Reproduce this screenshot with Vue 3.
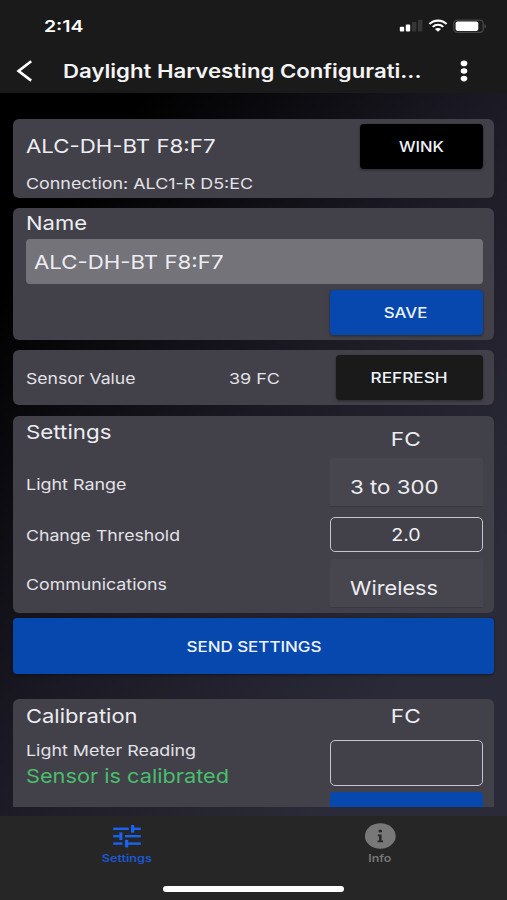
<script setup>
// Sets the width of a label's text box by stretching its glyphs horizontally.
const vFit = {
  mounted(el, { value }) {
    const natural = el.getBoundingClientRect().width
    el.style.transform = `scaleX(${value / natural})`
  },
}
</script>

<template>
  <div class="screen">
    <header class="top">
      <div class="status">
        <span v-fit="39.5" class="t time">2:14</span>
        <div class="status-icons">
          <svg class="signal" width="24" height="14" viewBox="0 0 24 14">
            <rect x="0.8" y="7.7" width="4.4" height="4.8" rx="1" fill="#fff" />
            <rect x="6.8" y="5.5" width="4.4" height="7" rx="1" fill="#fff" />
            <rect x="12.9" y="3" width="4.4" height="9.5" rx="1" fill="#363636" />
            <rect x="18.9" y="0.8" width="4.4" height="11.7" rx="1" fill="#363636" />
          </svg>
          <svg class="wifi" width="20" height="14" viewBox="0 0 20 14">
            <path d="M1.4 5.1C6 .4 14 .4 18.6 5.1" fill="none" stroke="#fff" stroke-width="2.1" />
            <path d="M4.7 7.9C7.6 5 12.4 5 15.3 7.9" fill="none" stroke="#fff" stroke-width="2" />
            <path d="M10 12.7L6.9 10.1C8.5 8.6 11.5 8.6 13.1 10.1Z" fill="#fff" />
          </svg>
          <svg class="battery" width="34" height="15" viewBox="0 0 34 15">
            <rect x="0.8" y="1.1" width="29.4" height="12.3" rx="3.4" fill="#1c1c1c" stroke="#474747" stroke-width="1.3" />
            <rect x="2.6" y="2.6" width="22.7" height="9.3" rx="1.8" fill="#fff" />
            <path d="M31.5 5C33.6 5.8 33.6 8.8 31.5 9.6Z" fill="#474747" />
          </svg>
        </div>
      </div>
      <div class="title-bar">
        <svg class="back" width="18" height="24" viewBox="0 0 18 24">
          <path d="M15.2 2.2L2.6 12L15.2 21.6" fill="none" stroke="#fff" stroke-width="2.7" />
        </svg>
        <h1><span v-fit="358.5" class="t title">Daylight Harvesting Configurati...</span></h1>
        <svg class="more" width="8" height="22" viewBox="0 0 8 22">
          <ellipse cx="4" cy="3.4" rx="3.3" ry="2.8" fill="#fff" />
          <ellipse cx="4" cy="11" rx="3.3" ry="2.8" fill="#fff" />
          <ellipse cx="4" cy="18.6" rx="3.3" ry="2.8" fill="#fff" />
        </svg>
      </div>
    </header>

    <main class="content">
      <section class="card device">
        <div class="device-info">
          <span v-fit="189.5" class="t lg">ALC-DH-BT F8:F7</span>
          <span v-fit="227" class="t md">Connection: ALC1-R D5:EC</span>
        </div>
        <button class="btn wink"><span v-fit="45" class="t caps">WINK</span></button>
      </section>

      <section class="card name">
        <h2><span v-fit="61" class="t lg">Name</span></h2>
        <div class="name-field"><span v-fit="189.5" class="t lg">ALC-DH-BT F8:F7</span></div>
        <button class="btn save"><span v-fit="43.5" class="t caps">SAVE</span></button>
      </section>

      <section class="card sensor">
        <div class="sensor-label"><span v-fit="109.5" class="t md">Sensor Value</span></div>
        <div class="sensor-value"><span v-fit="51" class="t md">39 FC</span></div>
        <button class="btn refresh"><span v-fit="77" class="t caps">REFRESH</span></button>
      </section>

      <section class="card settings">
        <div class="labels">
          <h2><span v-fit="85.5" class="t lg">Settings</span></h2>
          <label class="range-label"><span v-fit="100.5" class="t md">Light Range</span></label>
          <label class="threshold-label"><span v-fit="154" class="t md">Change Threshold</span></label>
          <label class="comm-label"><span v-fit="141" class="t md">Communications</span></label>
        </div>
        <div class="fields">
          <div class="unit"><span v-fit="30" class="t lg">FC</span></div>
          <div class="select range"><span v-fit="88.5" class="t lg">3 to 300</span></div>
          <div class="outlined threshold"><span v-fit="29.5" class="t mid">2.0</span></div>
          <div class="select comm"><span v-fit="88" class="t lg">Wireless</span></div>
        </div>
      </section>

      <button class="btn send"><span v-fit="135" class="t caps">SEND SETTINGS</span></button>

      <section class="card calibration">
        <div class="labels">
          <h2><span v-fit="111.5" class="t lg">Calibration</span></h2>
          <label class="meter-label"><span v-fit="170" class="t md">Light Meter Reading</span></label>
          <p class="state"><span v-fit="203" class="t lg">Sensor is calibrated</span></p>
        </div>
        <div class="fields">
          <div class="unit"><span v-fit="30" class="t lg">FC</span></div>
          <div class="outlined meter"></div>
          <div class="calibrate"></div>
        </div>
      </section>
    </main>

    <footer class="bottom">
      <nav>
        <a class="tab active">
          <svg width="30" height="24" viewBox="0 0 30 24">
            <g fill="#1a62f2">
              <rect x="1.2" y="3.6" width="15.6" height="2.4" />
              <rect x="19" y="1" width="3.2" height="7.6" />
              <rect x="22" y="3.6" width="6.8" height="2.4" />
              <rect x="1.2" y="11" width="6.3" height="2.4" />
              <rect x="7.3" y="8.4" width="3.1" height="7.6" />
              <rect x="13" y="11" width="15.8" height="2.4" />
              <rect x="1.2" y="18.4" width="9.2" height="2.4" />
              <rect x="13" y="15.8" width="3.2" height="7.6" />
              <rect x="16" y="18.4" width="12.8" height="2.4" />
            </g>
          </svg>
          <span v-fit="50" class="t tab-text">Settings</span>
        </a>
        <a class="tab">
          <svg width="32" height="26" viewBox="0 0 32 26">
            <ellipse cx="16.3" cy="13" rx="15.4" ry="12.7" fill="#787878" />
            <ellipse cx="16.3" cy="8.1" rx="1.8" ry="1.5" fill="#262626" />
            <path d="M13.8 11.4H17.6V17.4H19.1V19.3H13.6V17.4H15.1V13.2H13.8Z" fill="#262626" />
          </svg>
          <span v-fit="23" class="t tab-text">Info</span>
        </a>
      </nav>
      <div class="home-indicator"></div>
    </footer>
  </div>
</template>

<style>
body {
  margin: 0;
  background: #000;
}
</style>

<style scoped>
* {
  box-sizing: border-box;
}

.screen {
  display: flex;
  flex-direction: column;
  width: 507px;
  height: 900px;
  overflow: hidden;
  color: #ededf1;
  font-family: Inter, "Liberation Sans", sans-serif;
  background: linear-gradient(126deg, #000 18%, #1a1923 47%, #2b2a38 78%);
}

h1,
h2,
p {
  margin: 0;
  font-size: inherit;
  font-weight: 400;
}

.t {
  display: inline-block;
  flex: none;
  white-space: nowrap;
  transform-origin: left center;
}

.lg { font-size: 19.3px; }
.mid { font-size: 17.3px; }

.md {
  color: #e2e2e7;
  font-size: 15px;
}

.caps {
  font-size: 14.3px;
  font-weight: 500;
}

.btn .t,
.unit .t,
.outlined .t,
.tab .t {
  transform-origin: center;
}

.top {
  flex: none;
  height: 93px;
  padding-top: 14px;
  background: #1a1a1a;
  color: #fff;
}

.status {
  display: flex;
  align-items: center;
  justify-content: space-between;
  height: 24px;
  padding: 0 20px 0 44px;
}

.time {
  font-size: 15.6px;
  font-weight: 600;
}

.status-icons {
  display: flex;
  align-items: center;
}

.wifi,
.battery {
  margin-left: 5px;
}

.title-bar {
  display: flex;
  align-items: center;
  height: 34px;
  margin-top: 16px;
  padding: 0 39px 0 16px;
}

h1 {
  display: flex;
  flex: 1;
  margin-left: 28.5px;
}

.title {
  color: #f4f4f4;
  font-size: 18.6px;
  font-weight: 600;
}

.content {
  flex: none;
  height: 713.5px;
  padding: 25.5px 13px 0;
  overflow: hidden;
}

.card {
  display: flex;
  border-radius: 6px;
  background: #42414a;
}

.btn {
  display: flex;
  align-items: center;
  justify-content: center;
  padding: 0;
  border: 0;
  border-radius: 4px;
  color: #eef2fb;
  font-family: inherit;
  background: #0648ad;
  box-shadow: 0 1px 3px rgba(0, 0, 0, 0.4);
}

.device,
.name,
.sensor,
.settings,
.calibration {
  padding: 0 11.5px 0 12.5px;
}

.device {
  justify-content: space-between;
  height: 79px;
  padding-top: 5px;
}

.device-info {
  display: flex;
  flex-direction: column;
  align-items: flex-start;
}

.device-info .lg { line-height: 44px; }
.device-info .md { line-height: 32.5px; }

.wink {
  width: 122.5px;
  height: 45px;
  background: #000;
}

.name {
  flex-direction: column;
  height: 132.5px;
  margin-top: 10px;
}

.name h2 {
  height: 31.5px;
  line-height: 31px;
}

.name-field {
  display: flex;
  align-items: center;
  height: 45px;
  padding-left: 8.5px;
  border-radius: 4px;
  background: #737379;
}

.save {
  align-self: flex-end;
  width: 153px;
  height: 45px;
  margin-top: 6px;
}

.sensor {
  align-items: center;
  height: 55px;
  margin-top: 10px;
}

.sensor-label { width: 203.5px; }
.sensor-value { flex: 1; }

.refresh {
  width: 147px;
  height: 45px;
  background: #1a1a1a;
}

.settings {
  justify-content: space-between;
  height: 197.5px;
  margin-top: 10.5px;
}

.labels,
.fields {
  display: flex;
  flex-direction: column;
}

.fields { width: 153px; }

.labels h2 { line-height: 33px; }
.range-label { margin-top: 14px; line-height: 40px; }
.threshold-label { margin-top: 10px; line-height: 40px; }
.comm-label { margin-top: 8px; line-height: 40px; }

.unit {
  display: flex;
  align-items: center;
  justify-content: center;
}

.settings .unit {
  height: 30px;
  margin-top: 8px;
}

.select {
  display: flex;
  align-items: center;
  height: 49px;
  padding: 10px 0 0 20px;
  border-bottom: 1px solid #3a3941;
  border-radius: 3px 3px 0 0;
  background: #47464e;
}

.range { margin-top: 4px; }

.outlined {
  display: flex;
  align-items: center;
  justify-content: center;
  border: 1.5px solid #c6c5ce;
  border-radius: 5px;
}

.threshold {
  height: 35px;
  margin: 10.5px 0 6.5px;
}

.send {
  width: 100%;
  height: 56px;
  margin-top: 5px;
}

.calibration {
  justify-content: space-between;
  height: 180px;
  margin-top: 25px;
}

.calibration .labels h2 { line-height: 34px; }
.meter-label { margin-top: 2px; line-height: 28px; }

.state {
  color: #49bf6c;
  line-height: 22px;
}

.calibration .unit { height: 33px; }

.meter {
  height: 46px;
  margin-top: 8px;
}

.calibrate {
  height: 45px;
  margin-top: 6px;
  border-radius: 4px;
  background: #0648ad;
}

.bottom {
  display: flex;
  flex: 1;
  flex-direction: column;
  margin-top: 9.5px;
  background: #262626;
}

nav {
  display: flex;
  height: 70px;
}

.tab {
  display: flex;
  flex: 1;
  flex-direction: column;
  align-items: center;
  padding-top: 7px;
  color: #757575;
}

.tab svg {
  flex: none;
  height: 26px;
}

.tab-text {
  margin-top: 3px;
  font-size: 10.5px;
  font-weight: 600;
  line-height: 13px;
}

.active { color: #1a57cf; }

.home-indicator {
  width: 181px;
  height: 5.5px;
  margin-left: 163px;
  border-radius: 3px;
  background: #fff;
}
</style>
